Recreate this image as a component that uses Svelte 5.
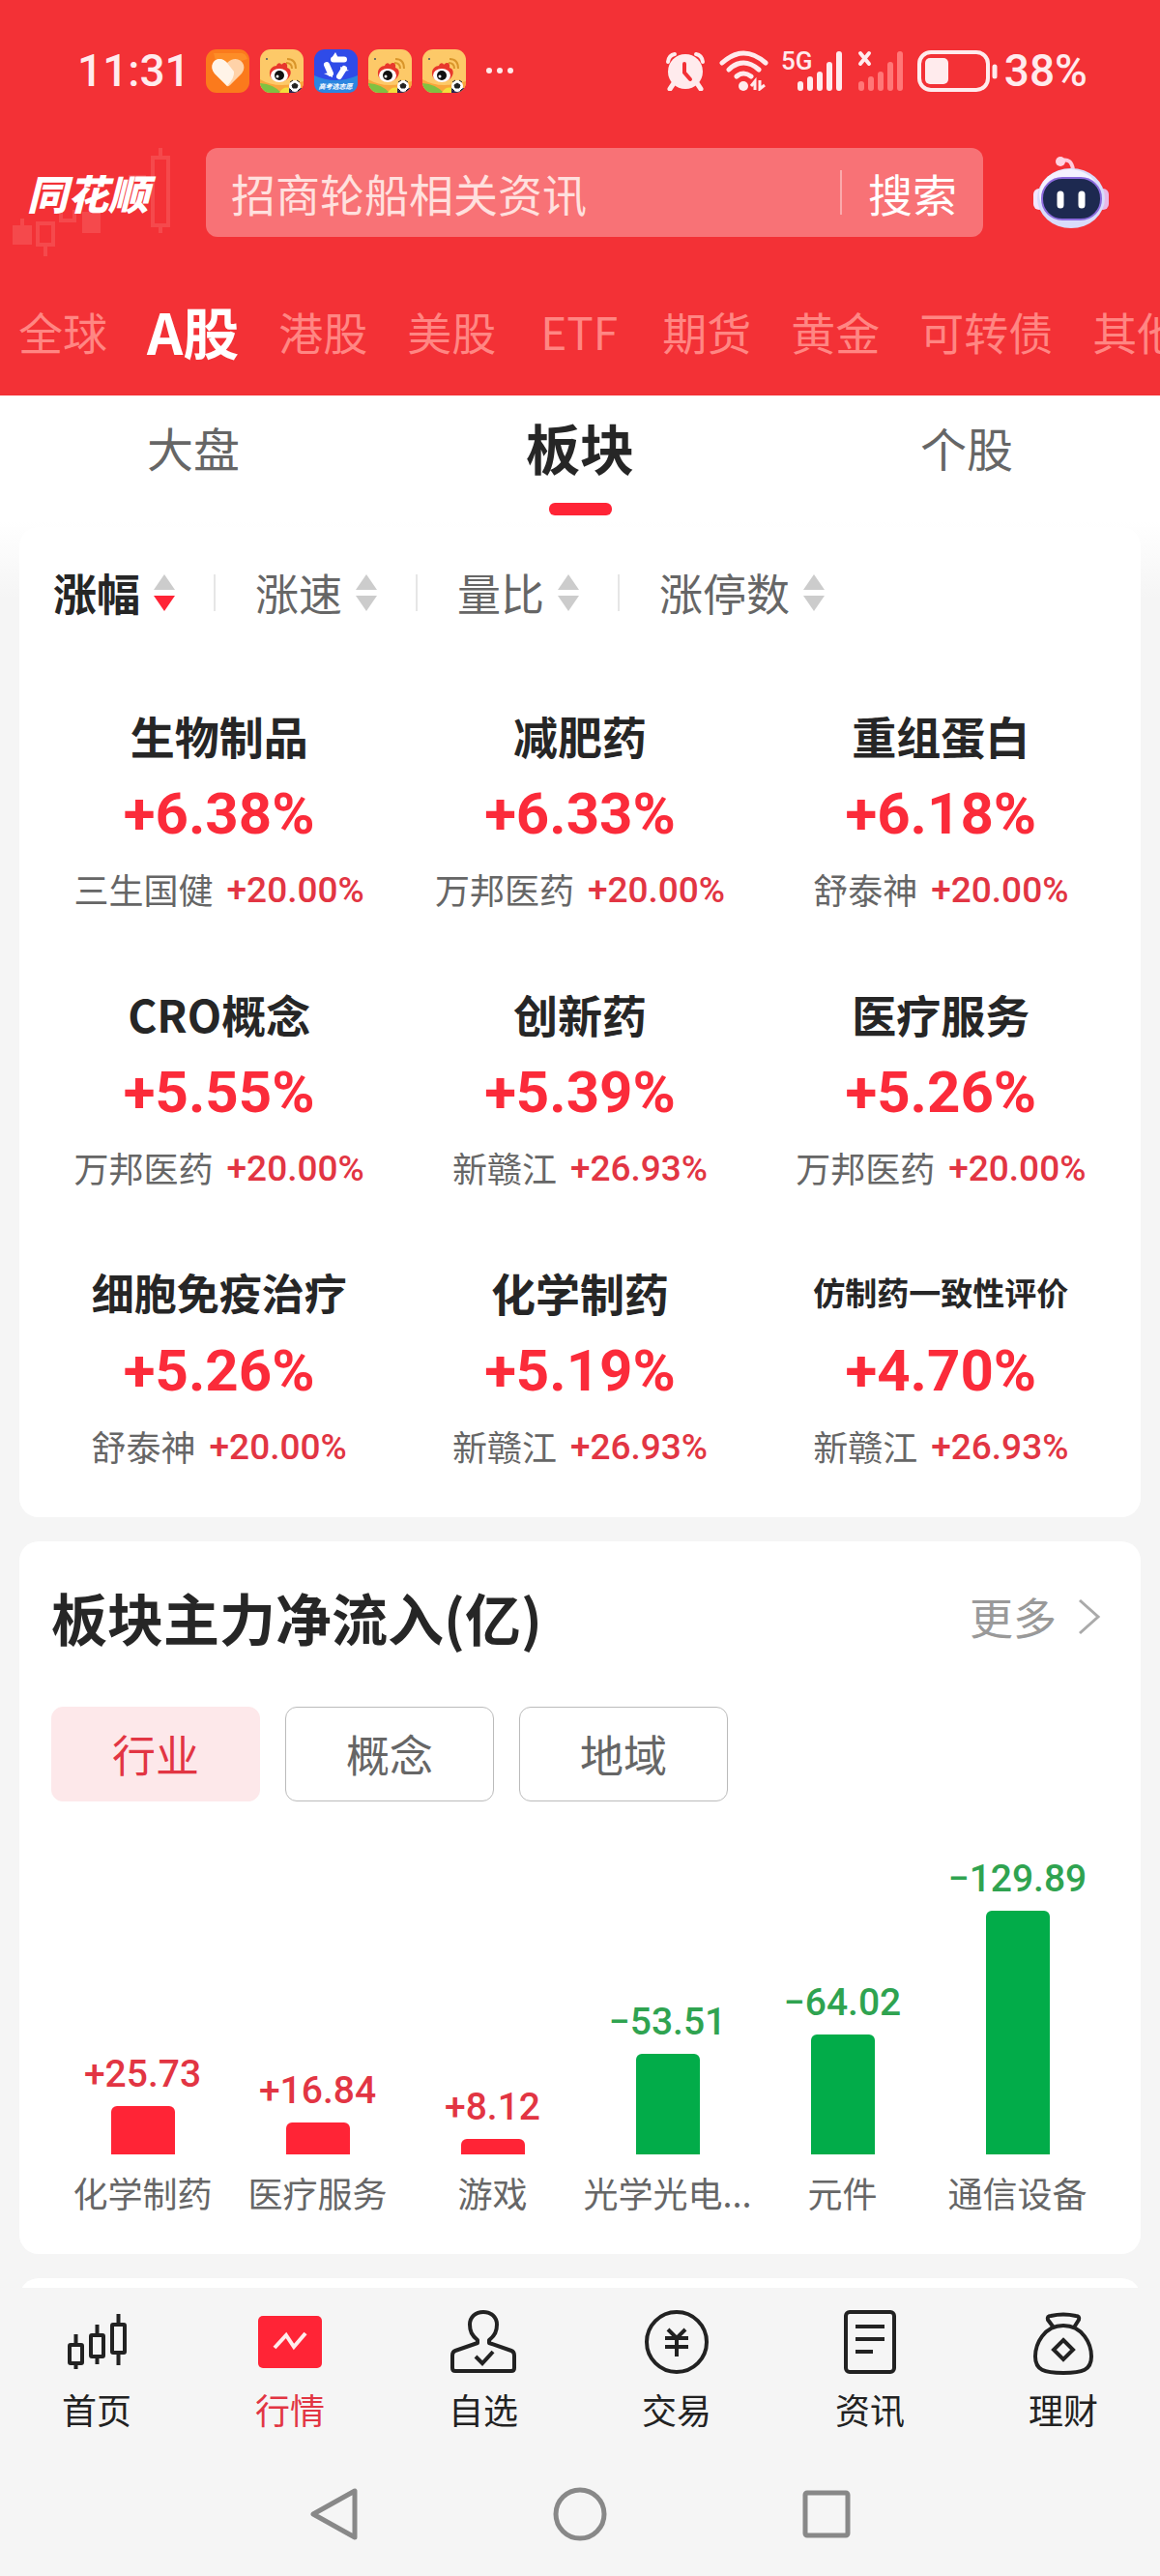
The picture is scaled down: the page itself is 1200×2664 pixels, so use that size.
<script>
    let keyword = "";
    let market = "A股";
    let view = "板块";
    let flowType = "行业";
    let page = "行情";

    const notices = ["heart", "weibo", "gaokao", "weibo", "weibo"];
    const markets = ["全球", "A股", "港股", "美股", "ETF", "期货", "黄金", "可转债", "其他"];
    const views = ["大盘", "板块", "个股"];
    const sorts = ["涨幅", "涨速", "量比", "涨停数"];
    const flowTypes = ["行业", "概念", "地域"];
    const pages = ["首页", "行情", "自选", "交易", "资讯", "理财"];

    const sectors = [
        { name: "生物制品", change: "+6.38%", stock: "三生国健", stockChange: "+20.00%" },
        { name: "减肥药", change: "+6.33%", stock: "万邦医药", stockChange: "+20.00%" },
        { name: "重组蛋白", change: "+6.18%", stock: "舒泰神", stockChange: "+20.00%" },
        { name: "CRO概念", change: "+5.55%", stock: "万邦医药", stockChange: "+20.00%" },
        { name: "创新药", change: "+5.39%", stock: "新赣江", stockChange: "+26.93%" },
        { name: "医疗服务", change: "+5.26%", stock: "万邦医药", stockChange: "+20.00%" },
        { name: "细胞免疫治疗", change: "+5.26%", stock: "舒泰神", stockChange: "+20.00%" },
        { name: "化学制药", change: "+5.19%", stock: "新赣江", stockChange: "+26.93%" },
        { name: "仿制药一致性评价", change: "+4.70%", stock: "新赣江", stockChange: "+26.93%" },
    ];

    const flows = [
        { name: "化学制药", value: 25.73 },
        { name: "医疗服务", value: 16.84 },
        { name: "游戏", value: 8.12 },
        { name: "光学光电...", value: -53.51 },
        { name: "元件", value: -64.02 },
        { name: "通信设备", value: -129.89 },
    ];

    const maxFlow = Math.max(...flows.map((f) => Math.abs(f.value)));
    const barHeight = (v) => Math.round((Math.abs(v) / maxFlow) * 252);
    const signed = (v) => (v < 0 ? "−" : "+") + Math.abs(v).toFixed(2);
</script>

<header>
    <div class="status">
        <span class="time">11:31</span>
        <div class="notices">
            {#each notices as notice}
                <svg class="app" viewBox="0 0 45 45">
                    {#if notice === "heart"}
                        <rect width="45" height="45" rx="11" fill="#fb7a1c" />
                        <path d="M8 4h29q4 0 6 6L12 20Z" fill="#ff9a2e" opacity=".6" />
                        <path
                            d="M22 38 9 25C1 15 13 4 22 14 31 4 45 14 37 25L25 37Q23 39 22 38Z"
                            fill="#ffd2a8"
                        />
                        <path d="M22 38 9 25C1 15 13 4 22 14L29 23Q30 29 22 38Z" fill="#fff4e8" />
                    {:else if notice === "weibo"}
                        <clipPath id="app-clip"><rect width="45" height="45" rx="11" /></clipPath>
                        <g clip-path="url(#app-clip)">
                            <rect width="45" height="45" fill="#fdc968" />
                            <path d="M0 31Q18 42 45 33V45H0Z" fill="#f9a63c" />
                            <path d="M0 35Q14 36 22 45H0Z" fill="#7fc142" />
                            <path d="M20 45Q24 38 31 40V45Z" fill="#f2e03c" />
                            <circle cx="7" cy="10" r="1" fill="#456" />
                            <path
                                d="M27 14q6 0 6 6M28 10q9 0 9 10"
                                fill="none"
                                stroke="#d9952a"
                                stroke-width="2"
                            />
                            <path
                                d="M10 26C9 20 14 17 17 17 18 13 22 14 22 16 26 12 29 15 28 19 33 20 33 27 28 31 21 36 11 33 10 26Z"
                                fill="#e8372c"
                            />
                            <ellipse cx="20" cy="27" rx="9" ry="7" fill="#fff" />
                            <circle cx="20" cy="27" r="5" fill="#111" />
                            <circle cx="18" cy="28" r="1.5" fill="#fff" />
                            <path d="M30 40h15v5H30Z" fill="#2c2352" />
                            <circle cx="36" cy="38" r="6" fill="#fff" />
                            <path
                                d="m36 35 3 2-1 3h-4l-1-3ZM31 34l3-2M41 34l-3-2M31 41l2 2M41 41l-2 2"
                                fill="#222"
                                stroke="#222"
                            />
                        </g>
                    {:else}
                        <rect width="45" height="45" rx="11" fill="#2f4be8" />
                        <path d="M0 27Q22 37 45 27V34Q45 45 34 45H11Q0 45 0 34Z" fill="#2c86e0" />
                        <g stroke="#fff" stroke-width="6" stroke-linecap="round">
                            <path d="M20 10.500H31M13 16l4 9M31 20l-5 8" />
                        </g>
                        <path d="m18 9 4-6 3 6ZM10 25l9-1v5ZM27 18l9 4-8 1Z" fill="#fff" />
                        <text class="app-text" x="22" y="41" text-anchor="middle">高考选志愿</text>
                    {/if}
                </svg>
            {/each}
        </div>
        <svg class="more-dots" viewBox="0 0 30 10" fill="#ffe9e9">
            <circle cx="4" cy="5" r="3" />
            <circle cx="15" cy="5" r="3" />
            <circle cx="26" cy="5" r="3" />
        </svg>

        <div class="system">
            <svg width="42" height="42" viewBox="0 0 42 42">
                <g stroke="#ffebed" stroke-linecap="round" fill="none">
                    <path d="M3 12Q4 5 10 4M32 4Q38 5 39 12" stroke-width="4" />
                    <path d="m9 34-4 6M33 34l4 6" stroke-width="5" />
                </g>
                <circle cx="21" cy="22" r="18" fill="#ffebed" />
                <path d="M20 14v9l6 7" fill="none" stroke="#f33136" stroke-width="4" stroke-linecap="round" />
            </svg>
            <svg width="52" height="42" viewBox="0 0 52 42">
                <g fill="none" stroke="#ffebed" stroke-width="5" stroke-linecap="round">
                    <path d="M3 13Q25-7 48 13M10 20Q25 6 41 20M18 27Q25 21 33 27" />
                </g>
                <circle cx="25" cy="37" r="5" fill="#ffebed" />
                <path d="M37 41v-9l-4 5M42 31v9l5-4" fill="none" stroke="#ffebed" stroke-width="3" />
            </svg>
            <svg class="signal" width="63" height="44" viewBox="0 0 63 44">
                <text class="net" x="-2" y="21">5G</text>
                <g stroke="#ffebed" stroke-width="6" stroke-linecap="round">
                    <path d="M18 36v4M28 31v9M38 26v14M48 16v24M58 5v35" />
                </g>
            </svg>
            <svg width="48" height="44" viewBox="0 0 48 44">
                <path d="m3 4 9 11m0-11-9 11" stroke="#ffebed" stroke-width="4" stroke-linecap="round" />
                <g stroke="#ff7777" stroke-width="6" stroke-linecap="round">
                    <path d="M4 36v4M14 31v9M24 26v14M34 16v24M44 5v35" />
                </g>
            </svg>
            <svg class="battery" width="84" height="44" viewBox="0 0 84 44">
                <rect x="2" y="3" width="71" height="39" rx="12" fill="none" stroke="#ffebed" stroke-width="4" />
                <rect x="8" y="9" width="24" height="27" rx="5" fill="#ffebed" />
                <path d="M80 18v10" stroke="#ffebed" stroke-width="5" stroke-linecap="round" />
            </svg>
            <span class="time">38%</span>
        </div>
    </div>

    <form class="search-row" on:submit|preventDefault>
        <div class="logo">
            <svg class="logo-candles" viewBox="0 0 170 116" fill="none" stroke="#f75a5c" stroke-width="4">
                <rect x="1" y="82" width="20" height="20" fill="#f75a5c" stroke="none" />
                <path d="M11 75v8M35 102v12M154 2v10M154 82v8" />
                <rect x="27" y="80" width="16" height="22" />
                <path d="M51 66v11h14V66M123 44v-12h16" />
                <rect x="73" y="68" width="19" height="22" fill="#f75a5c" stroke="none" />
                <rect x="146" y="12" width="16" height="70" />
            </svg>
            <span class="logo-text">同花顺</span>
        </div>
        <div class="search-box">
            <input type="text" aria-label="搜索" placeholder="招商轮船相关资讯" bind:value={keyword} />
            <button class="search-btn">搜索</button>
        </div>
        <button class="robot" type="button" aria-label="助手">
            <svg viewBox="0 0 80 76">
                <path d="M30 5q10-3 12 9" fill="none" stroke="#ffc9dc" stroke-width="4" />
                <circle cx="29" cy="6" r="5" fill="#ffd3e2" />
                <rect x="1" y="34" width="12" height="22" rx="6" fill="#f4e6ff" />
                <rect x="67" y="34" width="12" height="22" rx="6" fill="#e8b9e8" />
                <ellipse cx="40" cy="44" rx="35" ry="31" fill="#d9dcfb" />
                <ellipse cx="38" cy="40" rx="31" ry="26" fill="#f5f2ff" />
                <rect x="10" y="23" width="61" height="43" rx="21" fill="#1d2950" stroke="#8c6bdd" stroke-width="2" />
                <path d="M29 40v11M51 40v11" stroke="#fff" stroke-width="7" stroke-linecap="round" />
            </svg>
        </button>
    </form>

    <nav class="markets">
        {#each markets as m}
            <button class:active={market === m} on:click={() => (market = m)}>{m}</button>
        {/each}
    </nav>
</header>

<main>
    <nav class="views">
        {#each views as v}
            <button class:active={view === v} on:click={() => (view = v)}>
                <span>{v}</span>
            </button>
        {/each}
    </nav>

    <section class="card sectors">
        <div class="sorts">
            {#each sorts as s, i}
                <button class:active={i === 0}>
                    {s}
                    <svg viewBox="0 0 22 38">
                        <path d="M11 0 22 16H0Z" fill="#ccc" />
                        <path class="down" d="M11 38 22 22H0Z" />
                    </svg>
                </button>
            {/each}
        </div>
        <div class="sector-grid">
            {#each sectors as s}
                <div class="sector">
                    <div class="name" class:medium={s.name.length === 6} class:long={s.name.length > 6}>
                        {s.name}
                    </div>
                    <div class="change">{s.change}</div>
                    <div class="lead">
                        <span>{s.stock}</span>
                        <span class="lead-change">{s.stockChange}</span>
                    </div>
                </div>
            {/each}
        </div>
    </section>

    <section class="card flow">
        <div class="flow-head">
            <h2>板块主力净流入(亿)</h2>
            <a href="#more">
                更多
                <svg viewBox="0 0 24 38">
                    <path d="M2 2 21 19 2 36" fill="none" stroke="#aaa" stroke-width="3" />
                </svg>
            </a>
        </div>
        <div class="chips">
            {#each flowTypes as t}
                <button class:active={flowType === t} on:click={() => (flowType = t)}>{t}</button>
            {/each}
        </div>
        <div class="chart">
            {#each flows as f}
                <div class="column" class:down={f.value < 0}>
                    <div class="value">{signed(f.value)}</div>
                    <div class="bar" style="height: {barHeight(f.value)}px"></div>
                    <div class="label">{f.name}</div>
                </div>
            {/each}
        </div>
    </section>

    <!-- top edge of the next card, cut off by the tab bar -->
    <div class="peek"><div class="card"></div></div>
</main>

<footer>
    <nav class="pages">
        {#each pages as p}
            <button class:active={page === p} on:click={() => (page = p)}>
                <svg viewBox="0 0 70 70" fill="none" stroke="#222" stroke-width="4">
                    {#if p === "首页"}
                        <rect x="7" y="38" width="13" height="19" rx="1" />
                        <rect x="29" y="28" width="13" height="22" rx="1" />
                        <rect x="51" y="17" width="13" height="29" rx="1" />
                        <path d="M13.500 27v11M13.500 57v6M35.500 17v11M35.500 50v8M57.500 6v11M57.500 46v13" />
                    {:else if p === "行情"}
                        <rect x="2" y="8" width="66" height="54" rx="5" fill="#ff2436" stroke="none" />
                        <path d="M19 41 31 28 39 40 51 26" stroke="#ffecec" />
                    {:else if p === "自选"}
                        <path
                            d="M29 36V33C23 28 21 24 21 17 21 9 27 4 35 4 43 4 49 9 49 17 49 24 47 28 41 33V36L64 44Q67 45 67 49V62Q67 65 64 65H6Q3 65 3 62V49Q3 45 6 44Z"
                            stroke-linejoin="round"
                        />
                        <path d="m27 50 7 7 11-12" />
                    {:else if p === "交易"}
                        <circle cx="35" cy="35" r="31" />
                        <path d="m26 22 9 9 9-9M35 31v19M23 31h24M23 40h24" />
                    {:else if p === "资讯"}
                        <rect x="10" y="4" width="50" height="62" rx="4" />
                        <path d="M20 19h30M20 32h30M20 45h18" />
                    {:else}
                        <path
                            d="M25 20 19 12Q18 8 22 8 35 5 48 8 52 8 51 12L46 20M35 18C15 18 6 37 6 50 6 64 15 67 35 67 55 67 64 64 64 50 64 37 55 18 35 18Z"
                        />
                        <path d="m35 33 10 10-10 10-10-10Z" />
                    {/if}
                </svg>
                <span>{p}</span>
            </button>
        {/each}
    </nav>
    <div class="system-nav">
        <button aria-label="返回">
            <svg viewBox="0 0 56 56"><path d="M50 4v48L7 28Z" /></svg>
        </button>
        <button aria-label="主屏幕">
            <svg viewBox="0 0 56 56"><circle cx="28" cy="28" r="25" /></svg>
        </button>
        <button aria-label="最近任务">
            <svg viewBox="0 0 56 56"><rect x="6" y="6" width="44" height="44" rx="2" /></svg>
        </button>
    </div>
</footer>

<style>
    :global(body) {
        font-family: "Noto Sans CJK SC", sans-serif;
        background-color: #f5f5f5;
        color: #262626;
    }
    button,
    input {
        font: inherit;
        color: inherit;
        background: none;
        border: none;
        padding: 0;
        white-space: nowrap;
    }
    svg {
        display: block;
        flex: none;
    }

    /* header */
    header {
        background-color: #f33136;
        color: #ffebed;
        overflow: hidden;
    }
    .status {
        display: flex;
        align-items: center;
        height: 146px;
        padding: 0 75px 0 80px;
    }
    .time {
        font: 500 46px/60px Roboto, sans-serif;
    }
    .notices {
        display: flex;
        gap: 11px;
        margin-left: 16px;
    }
    .app {
        width: 45px;
        height: 45px;
    }
    .app-text {
        font: italic bold 7px "Noto Sans CJK SC", sans-serif;
        fill: #fff;
    }
    .more-dots {
        width: 30px;
        margin-left: 20px;
    }
    .system {
        display: flex;
        align-items: center;
        gap: 14px;
        margin-left: auto;
    }
    .system .time {
        margin-left: -8px;
    }
    .signal {
        overflow: visible;
    }
    .net {
        font: 500 26px Roboto, sans-serif;
        fill: #ffebed;
    }
    .search-row {
        display: flex;
        align-items: center;
        height: 92px;
        margin-top: 7px;
        padding: 0 52px 0 28px;
    }
    .logo {
        position: relative;
        width: 185px;
    }
    .logo-candles {
        position: absolute;
        left: -16px;
        top: -20px;
        width: 170px;
        opacity: 0.6;
    }
    .logo-text {
        position: relative;
        display: block;
        font-size: 42px;
        line-height: 56px;
        font-weight: 900;
        font-style: italic;
        color: #fff;
    }
    .search-box {
        flex: 1;
        display: flex;
        align-items: center;
        height: 92px;
        border-radius: 12px;
        background-color: #f87276;
        font-size: 46px;
    }
    .search-box input {
        flex: 1;
        min-width: 0;
        height: 60px;
        padding-left: 26px;
        outline: none;
    }
    .search-box input::placeholder {
        color: #ffe0de;
        opacity: 1;
    }
    .search-btn {
        height: 46px;
        line-height: 46px;
        padding: 0 27px;
        color: #fff;
        border-left: 2px solid #fba9ab;
    }
    .robot {
        width: 80px;
        margin-left: 51px;
    }
    .markets {
        display: flex;
        align-items: center;
        gap: 41px;
        height: 134px;
        padding: 30px 0 0 19px;
    }
    .markets button {
        flex: none;
        min-width: 90px;
        font-size: 46px;
        line-height: 60px;
        color: #ff8683;
    }
    .markets button.active {
        font-size: 58px;
        font-weight: bold;
        color: #fff;
    }

    main {
        background: linear-gradient(#fff 130px, #f5f5f5 210px);
    }
    .views {
        display: grid;
        grid-template-columns: repeat(3, 1fr);
        height: 136px;
    }
    .views button {
        display: flex;
        flex-direction: column;
        align-items: center;
        padding-top: 13px;
        font-size: 48px;
        line-height: 80px;
        color: #666;
    }
    .views .active {
        font-size: 56px;
        font-weight: bold;
        color: #262626;
    }
    .views .active::after {
        content: "";
        width: 65px;
        height: 13px;
        margin-top: 18px;
        border-radius: 6px;
        background-color: #ff2436;
    }

    .card {
        margin: 0 20px;
        border-radius: 20px;
        background-color: #fff;
    }
    .sectors {
        padding: 0 20px 22px;
    }
    .sorts {
        display: flex;
        align-items: center;
        height: 136px;
        padding: 0 0 2px 15px;
    }
    .sorts button {
        display: flex;
        align-items: center;
        gap: 14px;
        font-size: 45px;
        line-height: 60px;
        color: #666;
    }
    .sorts button + button::before {
        content: "";
        width: 2px;
        height: 38px;
        margin: 0 27px 0 40px;
        background-color: #e6e6e6;
    }
    .sorts svg {
        width: 22px;
        height: 38px;
    }
    .down {
        fill: #ccc;
    }
    .sorts .active {
        font-weight: bold;
        color: #262626;
    }
    .sorts .active .down {
        fill: #ff2436;
    }
    .sector-grid {
        display: grid;
        grid-template-columns: repeat(3, 1fr);
    }
    .sector {
        padding: 47px 0 30px;
        text-align: center;
        white-space: nowrap;
    }
    .name {
        font-size: 46px;
        line-height: 60px;
        font-weight: bold;
    }
    .name.medium {
        font-size: 44px;
    }
    .name.long {
        font-size: 33px;
    }
    .change {
        margin-top: 22px;
        font: bold 60px/60px Roboto, sans-serif;
        color: #fb2b3a;
    }
    .lead {
        display: flex;
        align-items: flex-end;
        justify-content: center;
        gap: 14px;
        margin-top: 25px;
        font-size: 36px;
        line-height: 44px;
        color: #666;
    }
    .lead-change {
        font: 500 37px/40px Roboto, sans-serif;
        color: #e23543;
    }

    .flow {
        margin-top: 25px;
        padding: 38px 33px 42px;
    }
    .flow-head {
        display: flex;
        align-items: center;
        justify-content: space-between;
        height: 80px;
    }
    h2 {
        margin: 0;
        font-size: 58px;
        line-height: 80px;
    }
    .flow-head a {
        display: flex;
        align-items: center;
        gap: 22px;
        margin-right: 8px;
        font-size: 45px;
        line-height: 60px;
        color: #999;
        text-decoration: none;
    }
    .flow-head a svg {
        width: 24px;
    }
    .chips {
        display: flex;
        gap: 26px;
        margin-top: 53px;
    }
    .chips button {
        width: 216px;
        height: 98px;
        border: 1px solid #bbb;
        border-radius: 12px;
        font-size: 45px;
        line-height: 60px;
        color: #666;
    }
    .chips .active {
        border-color: #fde8ea;
        background-color: #fde8ea;
        color: #e23543;
    }
    .chart {
        display: grid;
        grid-template-columns: repeat(6, 1fr);
        align-items: end;
        height: 426px;
        padding: 0 4px;
    }
    .column {
        display: flex;
        flex-direction: column;
        align-items: center;
        white-space: nowrap;
        color: #e23543;
    }
    .column.down {
        color: #2fa350;
    }
    .value {
        margin-bottom: 13px;
        font: 500 39px/40px Roboto, sans-serif;
    }
    .bar {
        width: 66px;
        border-radius: 6px 6px 0 0;
        background-color: #ff2436;
    }
    .column.down .bar {
        background-color: #02ac49;
    }
    .label {
        margin-top: 17px;
        font-size: 36px;
        line-height: 44px;
        color: #666;
    }
    .peek {
        height: 10px;
        padding-top: 25px;
        overflow: hidden;
    }
    .peek .card {
        height: 40px;
    }

    /* bottom bars */
    .pages {
        display: grid;
        grid-template-columns: repeat(6, 1fr);
        padding: 21px 0 22px;
    }
    .pages button {
        display: flex;
        flex-direction: column;
        align-items: center;
        gap: 12px;
        font-size: 36px;
        line-height: 44px;
        color: #222;
    }
    .pages svg {
        width: 70px;
        height: 70px;
    }
    .pages .active {
        color: #e23543;
    }
    .system-nav {
        display: flex;
        align-items: center;
        justify-content: center;
        gap: 199px;
        height: 129px;
    }
    .system-nav svg {
        width: 56px;
        height: 56px;
        fill: none;
        stroke: #888;
        stroke-width: 5;
        stroke-linejoin: round;
    }
</style>
